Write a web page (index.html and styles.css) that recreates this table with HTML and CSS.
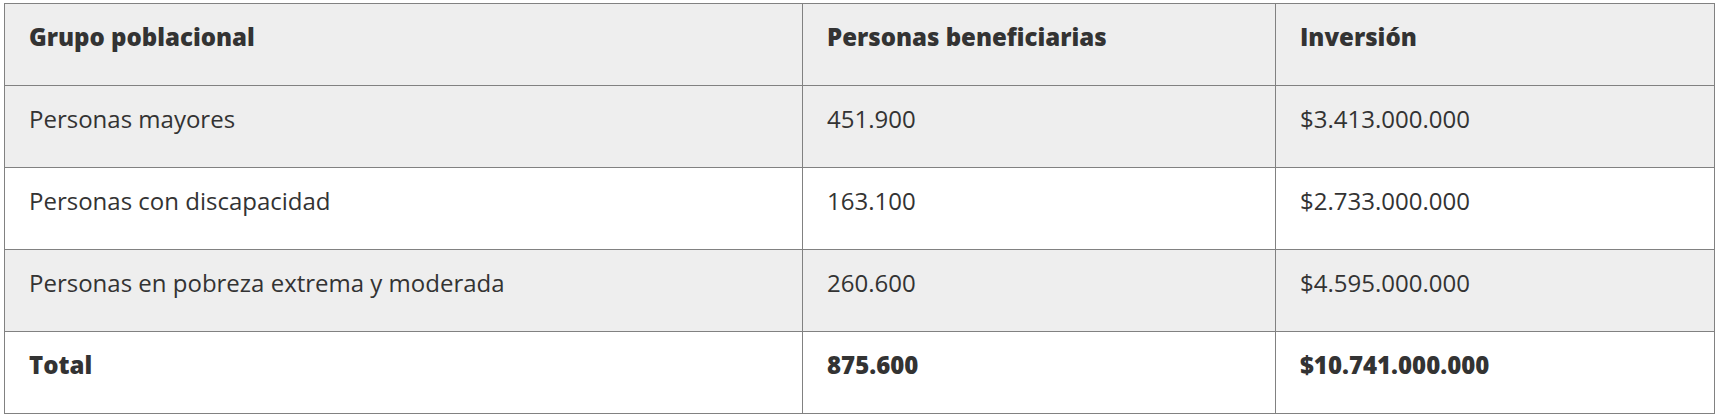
FILE: index.html
```html
<!DOCTYPE html>
<html lang="es">
<head>
<meta charset="utf-8">
<title>Tabla</title>
<link rel="stylesheet" href="styles.css">
</head>
<body>
<table class="data">
  <colgroup>
    <col class="c1"><col class="c2"><col class="c3">
  </colgroup>
  <thead>
    <tr class="shade">
      <th>Grupo poblacional</th>
      <th>Personas beneficiarias</th>
      <th>Inversión</th>
    </tr>
  </thead>
  <tbody>
    <tr class="shade">
      <td>Personas mayores</td>
      <td>451.900</td>
      <td>$3.413.000.000</td>
    </tr>
    <tr>
      <td>Personas con discapacidad</td>
      <td>163.100</td>
      <td>$2.733.000.000</td>
    </tr>
    <tr class="shade">
      <td>Personas en pobreza extrema y moderada</td>
      <td>260.600</td>
      <td>$4.595.000.000</td>
    </tr>
    <tr class="total">
      <td>Total</td>
      <td>875.600</td>
      <td>$10.741.000.000</td>
    </tr>
  </tbody>
</table>
</body>
</html>
```
FILE: styles.css
```css
html, body {
  margin: 0;
  padding: 0;
  background: #fff;
}
body {
  padding: 3px 3px 0 4px;
  font-family: "Open Sans", "Liberation Sans", sans-serif;
  color: #333;
}
.data {
  width: 1710px;
  border-collapse: collapse;
  table-layout: fixed;
}
.c1 { width: 798px; }
.c2 { width: 473px; }
.c3 { width: 439px; }
.data th, .data td {
  border: 1px solid #818181;
  text-align: left;
  vertical-align: top;
  height: 82px;
  box-sizing: border-box;
  padding: 15px 24px 0 24px;
  font-size: 24px;
  line-height: 36px;
}
.data th, .total td {
  font-weight: 800;
}
.shade th, .shade td {
  background: #eee;
}
```
